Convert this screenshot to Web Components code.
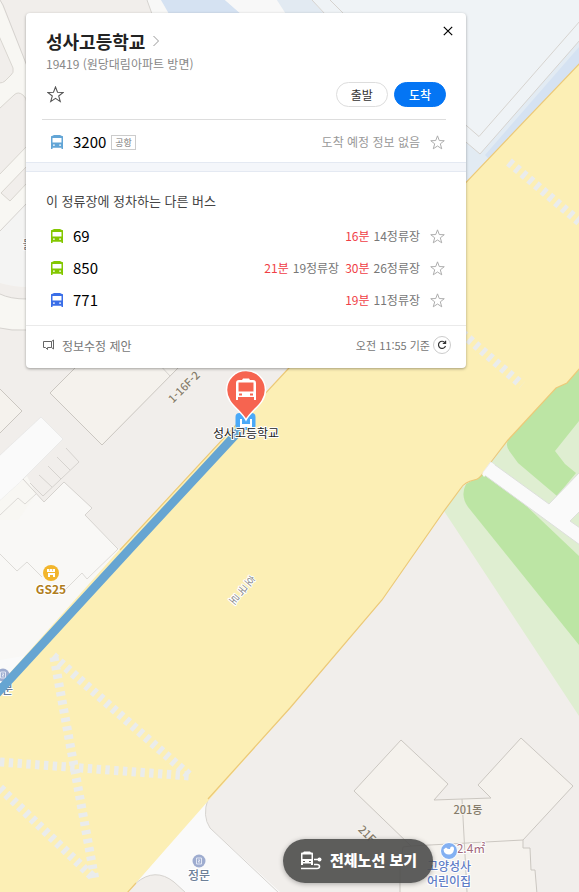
<!DOCTYPE html>
<html lang="ko">
  <head>
    <meta charset="utf-8">
    <meta name="viewport" content="width=device-width, initial-scale=1">
    <title>성사고등학교</title>
    <style>
      body {
        margin: 0;
        background: #f1eeeb;
        color: #222;
        font-family: "Noto Sans CJK KR", "Noto Sans", sans-serif;
        font-size: 12px;
      }
    </style>
  </head>

  <body>
    <transit-page>
      <map-canvas slot="map"></map-canvas>

      <stop-card name="성사고등학교" info="19419 (원당대림아파트 방면)" time="오전 11:55 기준">
        <bus-row slot="main" number="3200" tag="공항" color="#62a5d6">도착 예정 정보 없음</bus-row>
        <bus-row number="69" color="#83c700">
          <arrival-time min="16분">14정류장</arrival-time>
        </bus-row>
        <bus-row number="850" color="#83c700">
          <arrival-time min="21분">19정류장</arrival-time>
          <arrival-time min="30분">26정류장</arrival-time>
        </bus-row>
        <bus-row number="771" color="#3a6ee8">
          <arrival-time min="19분">11정류장</arrival-time>
        </bus-row>
        <!-- 스크롤 아래로 이어지는 줄 -->
        <bus-row></bus-row>
      </stop-card>

      <route-button slot="floating">전체노선 보기</route-button>
    </transit-page>

    <!-- 페이지 틀 : 지도 위에 카드가 떠 있음 -->
    <template id="page-template">
      <style>
        :host { display: block; position: relative; min-height: 100vh; overflow: hidden; }
        ::slotted([slot="map"]) { position: absolute; inset: 0; }
        ::slotted([slot="floating"]) { position: absolute; left: 283px; bottom: 9px; }
        main { position: relative; padding: 13px 113px 0 26px; }
      </style>
      <slot name="map"></slot>
      <main><slot></slot></main>
      <slot name="floating"></slot>
    </template>

    <!-- 지도 -->
    <template id="map-template">
      <style>
        :host { display: block; }
        svg { display: block; width: 100%; height: 100%; }
        text {
          font-family: "Noto Sans CJK KR", sans-serif;
          font-size: 12px;
          text-anchor: middle;
          paint-order: stroke;
          stroke: #fff;
          stroke-width: 2px;
          stroke-linejoin: round;
        }
        .line { fill: none; stroke: #d6d3cf; }
        .building { fill: #f5f2ed; stroke: #cbc7c1; }
        .white { fill: #fafafa; stroke: #e2e2e2; }
        .block { fill: #f1eeeb; stroke: #d9d6d0; }
        .cross { fill: none; stroke: #eaecec; stroke-width: 9; stroke-dasharray: 4.4 4.4; }
        .edge { fill: none; stroke: #ecc978; stroke-width: 1.2; }
        .gray { fill: #857c6b; stroke: #f5f2ed; font-size: 11px; font-weight: 500; }
        .poi { font-weight: 700; }
      </style>
      <svg viewBox="0 0 579 892" preserveAspectRatio="xMidYMid slice" role="img" aria-label="지도">
        <rect width="579" height="892" fill="#f1eeeb"/>

        <!-- 왼쪽 위 골목 -->
        <path d="M0 0L26 64V330L0 328Z" fill="#f8f7f3"/>
        <path class="line" d="M0 0L3 5L27 66"/>
        <path class="block" d="M-1 36L13 68Q14 73 11 75L5 81Q3 83 -1 83Z"/>
        <path class="block" d="M-1 109L14 95Q18 91 23 95Q27 98 27 104V146L-1 175Z"/>
        <path class="block" d="M27 166L1 193L10 201L27 183Z"/>
        <path d="M27 203L0 231V283Q14 287 27 287Z" fill="#f4f4f3"/>
        <path class="line" d="M27 203L0 231"/>
        <path d="M0 283Q14 287 27 287V299Q10 299 0 294Z" fill="#f1eeeb"/>
        <path class="line" d="M0 294Q10 299 27 299M0 328L12 330H27"/>

        <!-- 위쪽 파란 구역 -->
        <path d="M146 0H579V200H440Z" fill="#eff3f6"/>
        <path d="M147 0H161L170 14H152Z" fill="#f8f8f7"/>
        <path d="M161 0H225L241 14H169Z" fill="#d5e2f2"/>
        <path d="M225 0H277L286 14H241Z" fill="#f8f8f8"/>
        <path d="M277 0H312L324 14H286Z" fill="#e2eaf2"/>
        <path d="M312 0L325 14M330 0L344 14M147 0L152 14" class="line"/>
        <path d="M466 142L480 154L579 41V70L460 200Z" fill="#e2ebf3"/>
        <path d="M485 155L579 47V64L490 160Z" fill="#d5e2f2"/>
        <path class="line" d="M460 120L479 136.500L580 21M460 137L480 154L580 40"/>

        <!-- 왼쪽 건물 -->
        <path class="building" d="M-2 387L22 411L-2 435Z"/>
        <path class="building" d="M80 363L50 393L102 445L180 366Z"/>
        <path class="line" d="M158 363L170 376"/>
        <path d="M0 495L23 479L44 502L64 482L92 508L85 515L120 550L0 690Z" fill="#f9f8f6"/>
        <path d="M0 500L27 476L36 494L18 520L0 520Z" fill="#f8f7f3"/>
        <path class="white" d="M-2 457L41 417L63 439L22 480L-2 502Z" stroke-width=".6"/>
        <path d="M0 480L22 480L0 500Z" fill="#fafafa"/>
        <path class="line" d="M23 479L44 502L64 482L92 508L85 515L118 549"/>
        <path class="line" d="M66 448L79 462L43 496L30 483M57 457L70 470M48 466L61 479M39 475L52 487"/>
        <path class="line" d="M0 515L18 498L25 504L36 494M118 549L87 579L82 573L65 590M0 554L17 571L27 562L42 577" stroke-width=".8"/>
        <path d="M0 660L30 655L0 690Z" fill="#fafafa"/>

        <!-- 공원 -->
        <path d="M579 369L567 383L556 388L508 440L483 473L461 488L444 511L579 716Z" fill="#dfeed1"/>
        <path d="M579 369L567 383L556 388L508 440Q505 446 510 452L518 463L557 496L576 473L565 464L555 451L579 421Z" fill="#bce5a4"/>
        <path d="M484 474L466 484Q460 496 468 507L579 645V556L520 500Z" fill="#bce5a4"/>
        <path d="M491 462L549 504L580 472V511L570 521L580 528V545L483 474Z" fill="#fafafa" stroke="#dddfdc"/>

        <!-- 오른쪽 아래 건물 -->
        <path class="building" d="M401 740L448 784L434 800L491 798L478 785L521 738L573 786L523 840V848H530L531 870H535L537 894H400V868L403 847L411 846L354 791Z"/>
        <path class="building" d="M462 799L467 892M411 846L523 840"/>

        <!-- 큰 도로 -->
        <path d="M208 799L136 883L150 892H280L210 828Q203 815 208 799Z" fill="#fafafa"/>
        <path class="line" d="M208 799Q202 816 210 828L280 894"/>
        <path d="M136 883Q155 867 174 882L186 893H126Z" fill="#f1eeeb"/>
        <path class="line" d="M136 883Q155 867 174 882L186 893"/>
        <path d="M580 63L288 369L120 549L32 648L0 684V892H128L290 708L382 600L444 511L461 488Q464 483 470 481L478 479L490 462L508 440L556 388L567 383L580 368Z" fill="#fcefb5"/>
        <path class="edge" d="M580 63L288 369L120 550M580 368L567 383L556 388L508 440L491 462M483 473Q480 479 474 480Q465 482 461 488L444 511L382 600L290 708L208 799M136 883L127 893"/>
        <path d="M482 474L491 462L495 465L484 477Z" fill="#fafafa"/>
        <path class="cross" d="M509 162L582 224M462 333L522 385M53 656L190 776M54 657L95 880M0 762L190 776M0 788L95 879"/>

        <!-- 지도 글자 -->
        <text x="28" y="249" fill="#777">물</text>
        <text class="gray" transform="translate(184 387) rotate(-45)" y="4">1-16F-2</text>
        <text class="gray" transform="translate(367 834) rotate(45)" y="4">21F</text>
        <text class="gray" x="468" y="814">201동</text>
        <text transform="translate(250 581) rotate(40)" style="font-size: 11px" fill="#8d8d8d">
          <tspan x="0" y="4">호</tspan><tspan x="0" y="16">국</tspan><tspan x="0" y="28">로</tspan>
        </text>
        <circle cx="51" cy="573" r="8" fill="#f2b52c"/>
        <path d="M47 569h8v3h-8zM48 573h7v4h-2v-2h-3v2h-2z" fill="#fff"/>
        <path d="M49.500 568v3M52.500 568v3" stroke="#f2b52c" stroke-width=".6"/>
        <text class="poi" x="51" y="594" fill="#b07d20">GS25</text>
        <g fill="#9eaccf">
          <circle cx="199" cy="861" r="6.500"/>
          <circle cx="3" cy="675" r="6.500"/>
        </g>
        <path d="M196.500 858h5v6h-5zM198 860h2l-2 2h2M.5 672h5v6h-5zM2 674h2l-2 2h2" fill="none" stroke="#e8ecf7" stroke-width=".9"/>
        <text x="199" y="880" fill="#6d8098" font-weight="500">정문</text>
        <text x="2" y="694" fill="#6d8098" font-weight="500">정문</text>
        <text x="471" y="853" fill="#a2687b">2.4㎡</text>
        <circle cx="449" cy="851" r="8.500" fill="#83b0f2" stroke="#fff"/>
        <path d="M443.500 849.500l2.500-2q2 2 4 1.500q0-3 2.500-2.500q2 .5 1.500 3q-1 5-5 5q-5 0-5.500-5z" fill="#fff"/>
        <g fill="#5f7dc6" font-weight="500">
          <text x="449" y="871">고양성사</text>
          <text x="449" y="886">어린이집</text>
        </g>

        <!-- 노선 -->
        <path d="M-4 694.500L138 540L240 430" fill="none" stroke="#66a5d2" stroke-width="8.500"/>

        <!-- 정류장 핀 -->
        <rect x="235.500" y="413" width="20" height="17" rx="4" fill="#4aa9f8"/>
        <path d="M240 419h2v5h8v-5h2v10h-2v-2h-8v2h-2z" fill="#fff"/>
        <path d="M246 420C241 410 226.500 404 226.500 390A19.500 19.500 0 0 1 265.500 390C265.500 404 251 410 246 420Z" fill="#f66450" stroke="#fff" stroke-width="1.500"/>
        <path fill="#fff" fill-rule="evenodd" d="M239 380h3l1-1.500h6l1 1.500h3q3 0 3 3v17h-2v-3h-16v3h-2v-17q0-3 3-3zM238.500 382.500v9h15v-9zM239 393.500v2h3v-2zM250 393.500v2h3v-2z"/>
        <text x="246" y="438" fill="#222">성사고등학교</text>
      </svg>
    </template>

    <!-- 별 버튼 -->
    <template id="star-template">
      <style>
        :host { display: flex; color: #a9a9a9; }
        button { display: flex; padding: 0; border: 0; background: none; color: inherit; cursor: pointer; }
        svg { width: var(--star-size, 15px); height: var(--star-size, 15px); }
      </style>
      <button type="button" aria-label="즐겨찾기">
        <svg viewBox="0 0 16 16" fill="none" stroke="currentColor"><path d="M8 .9L9.900 5.900L15.200 6.100L11 9.400L12.500 14.700L8 11.700L3.500 14.700L5 9.400L.8 6.100L6.100 5.900Z"/></svg>
      </button>
    </template>

    <!-- 몇 분 / 몇 정류장 -->
    <template id="arrival-template">
      <style>
        :host { display: flex; gap: 4px; color: #777; }
        b { font-weight: 400; color: #f03e46; }
      </style>
      <b></b><span><slot></slot></span>
    </template>

    <!-- 버스 한 줄 -->
    <template id="bus-template">
      <style>
        :host { display: flex; align-items: center; height: 32px; padding: 0 21px 0 25px; color: #999; }
        .icon { width: 12px; height: 14px; margin-right: 10px; }
        .number { color: #000; font-size: 15px; line-height: 20px; }
        .tag {
          margin-left: 5px;
          padding: 0 3px;
          border: 1px solid #ccc;
          color: #777;
          font-size: 9px;
          line-height: 13px;
        }
        .info { display: flex; gap: 6px; margin-left: auto; line-height: 18px; }
        star-button { margin-left: 10px; }
      </style>
      <svg class="icon" viewBox="0 0 12 14"><path fill="currentColor" fill-rule="evenodd" d="M1 1L3 0h6l2 1h.5q.5 0 .5.5V14h-1.500v-1.200h-9V14H0V1.500Q0 1 .5 1zM1.500 3v4.500h9V3zM2 9.500v1.300h1.800V9.500zM8.200 9.500v1.300H10V9.500z"/></svg>
      <span class="number"></span>
      <span class="tag"></span>
      <span class="info"><slot></slot></span>
      <star-button></star-button>
    </template>

    <!-- 정류장 카드 -->
    <template id="card-template">
      <style>
        :host {
          display: block;
          border-radius: 4px;
          background: #fff;
          box-shadow: 0 1px 3px rgba(0, 0, 0, .35);
        }
        h1, h2, p { margin: 0; }
        button { font-family: inherit; cursor: pointer; }
        header { display: flex; justify-content: space-between; padding: 15px 13px 0 20px; }
        h1 { font-size: 18px; line-height: 26px; }
        h1 a { display: flex; align-items: center; gap: 7px; color: #222; text-decoration: none; }
        header p { color: #888; line-height: 20px; }
        .close { display: flex; align-self: flex-start; margin-top: -2px; padding: 0; border: 0; background: none; }
        .actions {
          display: flex;
          align-items: center;
          gap: 6px;
          margin: 0 20px 0 16px;
          padding: 8px 0 12px 5px;
          border-bottom: 1px solid #ddd;
        }
        .actions star-button { --star-size: 17px; margin-right: auto; color: #555; }
        .actions button {
          height: 25px;
          padding: 0 14px;
          border: 1px solid #ddd;
          border-radius: 13px;
          background: #fff;
          color: #333;
          font-size: 12px;
          line-height: 22px;
        }
        .actions .goal { border-color: #0475f4; background: #0475f4; color: #fff; font-weight: 500; }
        .main { padding: 6px 0 4px; }
        .band { height: 8px; border: 1px solid #e4e9f2; border-width: 1px 0; background: #f4f6fa; }
        h2 { padding: 19px 20px 9px; color: #444; font-size: 13px; font-weight: 400; line-height: 20px; }
        .list { height: 105px; overflow: hidden; }
        footer {
          display: flex;
          align-items: center;
          justify-content: space-between;
          height: 38px;
          padding: 0 15px 4px 17px;
          border-top: 1px solid #eaeaea;
          color: #777;
        }
        footer a { display: flex; align-items: center; gap: 7px; color: inherit; text-decoration: none; }
        .time { display: flex; align-items: center; gap: 3px; font-size: 11px; }
        .refresh {
          display: flex;
          align-items: center;
          justify-content: center;
          width: 18px;
          height: 18px;
          padding: 0;
          border: 1px solid #ccc;
          border-radius: 50%;
          background: #fff;
        }
      </style>
      <header>
        <div>
          <h1><a href="#"><span id="name"></span><svg width="8" height="12" viewBox="0 0 8 12" fill="none" stroke="#999"><path d="M1.500 1L6.500 6L1.500 11"/></svg></a></h1>
          <p id="info"></p>
        </div>
        <button class="close" type="button" aria-label="닫기">
          <svg width="10" height="10" viewBox="0 0 10 10" stroke="#000" stroke-width="1.200"><path d="M.8.800L9.200 9.200M9.200.800L.8 9.200"/></svg>
        </button>
      </header>
      <div class="actions">
        <star-button></star-button>
        <button type="button">출발</button>
        <button type="button" class="goal">도착</button>
      </div>
      <div class="main"><slot name="main"></slot></div>
      <div class="band"></div>
      <h2>이 정류장에 정차하는 다른 버스</h2>
      <div class="list"><slot></slot></div>
      <footer>
        <a href="#">
          <svg width="12" height="12" viewBox="0 0 12 12" fill="none" stroke="#666"><path d="M.5 2.500H8.500V8.500H4.500V10.500L2.500 8.500H.5ZM8.500 2.500L10.500 1V10L8.500 8.500"/></svg>
          정보수정 제안
        </a>
        <div class="time">
          <span id="time"></span>
          <button class="refresh" type="button" aria-label="새로고침">
            <svg width="10" height="10" viewBox="0 0 10 10" fill="none" stroke="#333" stroke-width="1.200"><path d="M8 2.700A3.600 3.600 0 1 0 8.500 6M8.600.700V3.400H5.800"/></svg>
          </button>
        </div>
      </footer>
    </template>

    <!-- 전체노선 버튼 -->
    <template id="route-template">
      <style>
        :host { display: block; }
        button {
          display: flex;
          align-items: center;
          gap: 8px;
          height: 44px;
          padding: 0 16px 0 17px;
          border: 0;
          border-radius: 22px;
          background: rgba(77, 76, 75, .9);
          box-shadow: 0 1px 5px rgba(0, 0, 0, .3);
          color: #fff;
          font: 900 15px/40px "Noto Sans CJK KR", sans-serif;
          cursor: pointer;
        }
        span { padding-bottom: 3px; }
      </style>
      <button type="button">
        <svg width="22" height="20" viewBox="0 0 22 20">
          <path fill="#fff" fill-rule="evenodd" d="M3 1.500L4 .5h6l1 1h1q1 0 1 1V14h-2v-1.500H3V14H1V2.500q0-1 1-1zM2.500 3.500v4.500h9V3.500zM3 10v1h2v-1zM9 10v1h2v-1z"/>
          <circle cx="19.500" cy="8.500" r="2" fill="#fff"/>
          <path d="M14 8.500h4M1 17.500h16q2.500 0 2.500-2t-2.500-2h-3" fill="none" stroke="#fff" stroke-width="1.600"/>
        </svg>
        <span><slot></slot></span>
      </button>
    </template>

    <script>
      // <template> 복사해서 shadow DOM에 넣어주는 공통 클래스
      class BaseElement extends HTMLElement {
        connectedCallback() {
          if (this.shadowRoot) return;
          this.attachShadow({ mode : 'open' });
          let template = document.getElementById(this.constructor.template);
          this.shadowRoot.append(template.content.cloneNode(true));
          this.render();
        }
        render() {}
        find(selector) {
          return this.shadowRoot.querySelector(selector);
        }
      }

      class TransitPage extends BaseElement {
        static template = 'page-template';
      }

      class MapCanvas extends BaseElement {
        static template = 'map-template';
      }

      class StarButton extends BaseElement {
        static template = 'star-template';
      }

      class ArrivalTime extends BaseElement {
        static template = 'arrival-template';
        render() {
          this.find('b').textContent = this.getAttribute('min');
        }
      }

      class BusRow extends BaseElement {
        static template = 'bus-template';
        render() {
          this.find('.icon').style.color = this.getAttribute('color') || 'transparent';
          this.find('.number').textContent = this.getAttribute('number') || '';
          let tag = this.getAttribute('tag');
          // 태그 없는 버스는 박스도 지움
          if (tag) this.find('.tag').textContent = tag;
          else this.find('.tag').remove();
        }
      }

      class StopCard extends BaseElement {
        static template = 'card-template';
        render() {
          for (let key of ['name', 'info', 'time']) {
            this.find('#' + key).textContent = this.getAttribute(key);
          }
        }
      }

      class RouteButton extends BaseElement {
        static template = 'route-template';
      }

      customElements.define('transit-page', TransitPage);
      customElements.define('map-canvas', MapCanvas);
      customElements.define('star-button', StarButton);
      customElements.define('arrival-time', ArrivalTime);
      customElements.define('bus-row', BusRow);
      customElements.define('stop-card', StopCard);
      customElements.define('route-button', RouteButton);
    </script>
  </body>
</html>
